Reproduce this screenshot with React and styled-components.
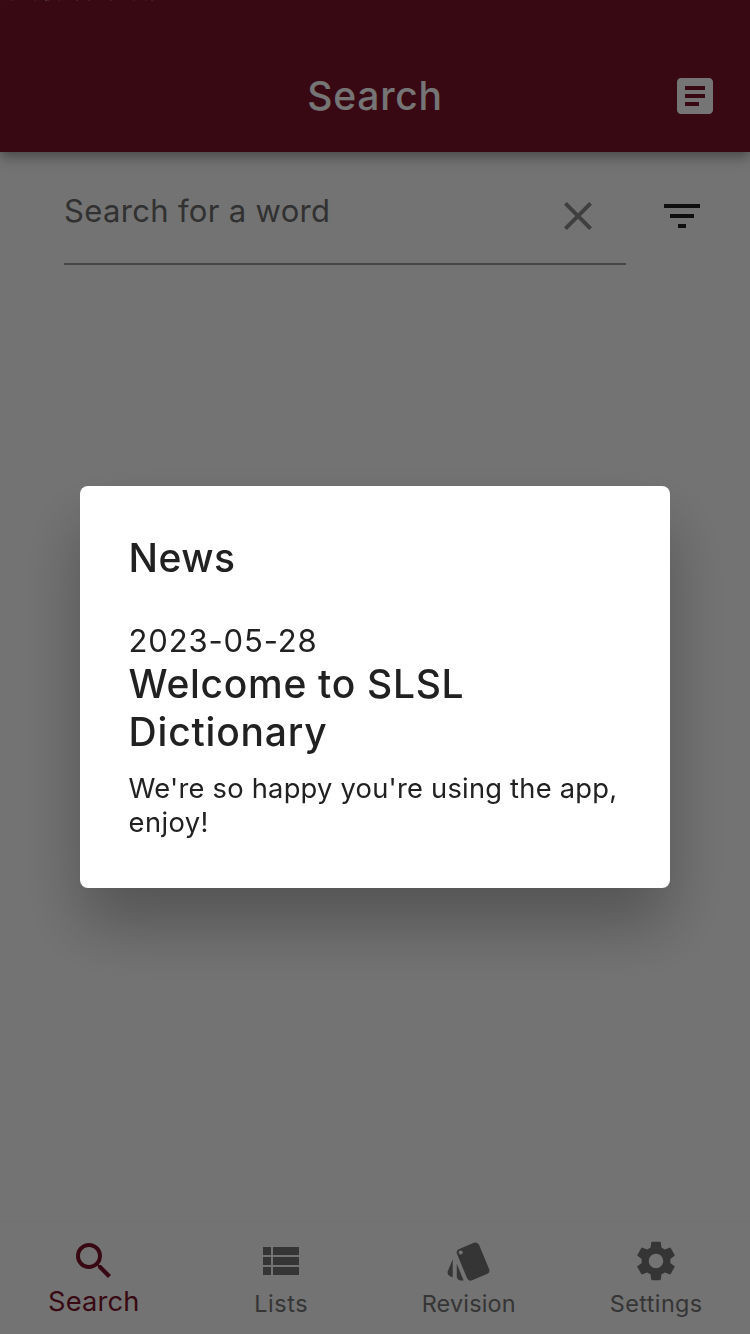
import React from "react";
import styled, { createGlobalStyle } from "styled-components";
import { MdArticle, MdClear, MdFilterList, MdSearch, MdStyle, MdSettings } from "react-icons/md";

const GlobalStyle = createGlobalStyle`
  *, *::before, *::after { box-sizing: border-box; }
  body {
    margin: 0;
    font-family: Inter, "Liberation Sans", sans-serif;
    font-weight: 370;
    background: #fafafa;
    overflow: hidden;
  }
  h1, h2, h3, p { margin: 0; }
  svg { display: block; }
`;

const Screen = styled.div`
  display: flex;
  flex-direction: column;
  width: 750px;
  height: 1334px;
  background: #fafafa;
`;

const AppBar = styled.header`
  flex: none;
  height: 152px;
  background: #7c142b;
  box-shadow: 0 4px 8px -2px rgba(0, 0, 0, 0.2), 0 8px 12px rgba(0, 0, 0, 0.2);
`;

const StatusStrip = styled.div`
  height: 40px;
`;

const Toolbar = styled.div`
  display: grid;
  grid-template-columns: 48px 1fr 48px;
  align-items: center;
  height: 112px;
  padding: 0 31px;
`;

const Title = styled.h1`
  grid-column: 2;
  font-size: 39px;
  font-weight: 460;
  line-height: 112px;
  letter-spacing: 0.75px;
  text-align: center;
  color: #fff;
`;

const IconButton = styled.button`
  display: block;
  width: 48px;
  height: 48px;
  padding: 0;
  border: 0;
  background: none;
  color: ${(p) => p.$color};
`;

const SearchRow = styled.div`
  display: flex;
  align-items: flex-start;
  padding: 40px 44px 0 64px;
`;

const Field = styled.div`
  display: flex;
  justify-content: space-between;
  width: 562px;
  height: 73px;
  margin-right: 32px;
  padding-right: 24px;
  border-bottom: 2px solid #9e9e9e;
`;

const Placeholder = styled.span`
  font-size: 31px;
  line-height: 38px;
  letter-spacing: 0.33px;
  color: #6c6c6c;
`;

const Results = styled.main`
  flex: 1;
`;

const NavBar = styled.nav`
  display: grid;
  grid-template-columns: repeat(4, 1fr);
  flex: none;
  height: 113px;
  padding-top: 15px;
  border-top: 1px solid #f5f5f5;
`;

const NavItem = styled.a`
  display: flex;
  flex-direction: column;
  align-items: center;
  color: ${(p) => (p.$active ? "#7c142b" : "#757575")};
`;

const NavLabel = styled.span`
  font-size: ${(p) => (p.$active ? "27.3px" : "23.4px")};
  line-height: ${(p) => (p.$active ? "34px" : "37px")};
  letter-spacing: ${(p) => p.$spacing}px;
`;

const Scrim = styled.div`
  position: fixed;
  inset: 0;
  display: flex;
  align-items: flex-start;
  justify-content: center;
  padding-top: 486px;
  background: rgba(0, 0, 0, 0.54);
`;

const Dialog = styled.section`
  width: 590px;
  height: 402px;
  padding: 48px 48px 0 48.6px;
  border-radius: 8px;
  background: #fff;
  color: #212121;
  box-shadow: 0 37px 64px rgba(0, 0, 0, 0.27);
`;

const Heading = styled.h2`
  font-size: 39px;
  font-weight: 480;
  line-height: 48px;
  letter-spacing: ${(p) => p.$spacing}px;
`;

const NewsDate = styled.p`
  margin-top: 40px;
  font-size: 31px;
  line-height: 38px;
  letter-spacing: 0.85px;
`;

const NewsText = styled.p`
  margin-top: 16px;
  font-size: 27.3px;
  line-height: 34px;
  letter-spacing: ${(p) => p.$spacing}px;
  white-space: nowrap;
  & + & { margin-top: 0; }
`;

const ListIcon = () => (
  <svg width="48" height="48" viewBox="0 0 24 24" fill="currentColor">
    <path d="M3 14h4v-4H3v4zm0 5h4v-4H3v4zM3 9h4V5H3v4zm5 5h13v-4H8v4zm0 5h13v-4H8v4zM8 5v4h13V5H8z" />
  </svg>
);

const statusMarks = [[4, 0.1], [11, 0.25], [34, 0.22], [45, 0.6], [47, 0.3], [58, 0.2], [76, 0.3], [88, 0.3], [110, 0.3], [133, 0.2], [145, 0.1], [151, 0.3]];

const tabs = [
  { label: "Search", icon: <MdSearch size={48} />, active: true, spacing: 0.12 },
  { label: "Lists", icon: <ListIcon />, spacing: 0.6 },
  { label: "Revision", icon: <MdStyle size={48} />, spacing: 0.2 },
  { label: "Settings", icon: <MdSettings size={48} />, spacing: 0.4 },
];

export default function App() {
  return (
    <>
      <GlobalStyle />
      <Screen>
        <AppBar>
          <StatusStrip>
            <svg width="160" height="1" fill="#fff">
              {statusMarks.map(([x, o]) => (
                <rect key={x} x={x} width="2" height="1" opacity={o * 0.6} />
              ))}
            </svg>
          </StatusStrip>
          <Toolbar>
            <Title>Search</Title>
            <IconButton $color="#fff" aria-label="News"><MdArticle size={48} /></IconButton>
          </Toolbar>
        </AppBar>
        <SearchRow>
          <Field>
            <Placeholder>Search for a word</Placeholder>
            <IconButton $color="#8a8a8a" aria-label="Clear"><MdClear size={48} /></IconButton>
          </Field>
          <IconButton $color="#212121" aria-label="Filter"><MdFilterList size={48} /></IconButton>
        </SearchRow>
        <Results />
        <NavBar>
          {tabs.map((t) => (
            <NavItem key={t.label} $active={t.active}>
              {t.icon}
              <NavLabel $active={t.active} $spacing={t.spacing}>{t.label}</NavLabel>
            </NavItem>
          ))}
        </NavBar>
      </Screen>
      <Scrim>
        <Dialog role="dialog">
          <Heading $spacing={0.45}>News</Heading>
          <NewsDate>2023-05-28</NewsDate>
          <Heading as="h3" $spacing={0.7}>Welcome to SLSL</Heading>
          <Heading as="h3" $spacing={0.8}>Dictionary</Heading>
          <NewsText $spacing={0.23}>We're so happy you're using the app,</NewsText>
          <NewsText $spacing={0.4}>enjoy!</NewsText>
        </Dialog>
      </Scrim>
    </>
  );
}
